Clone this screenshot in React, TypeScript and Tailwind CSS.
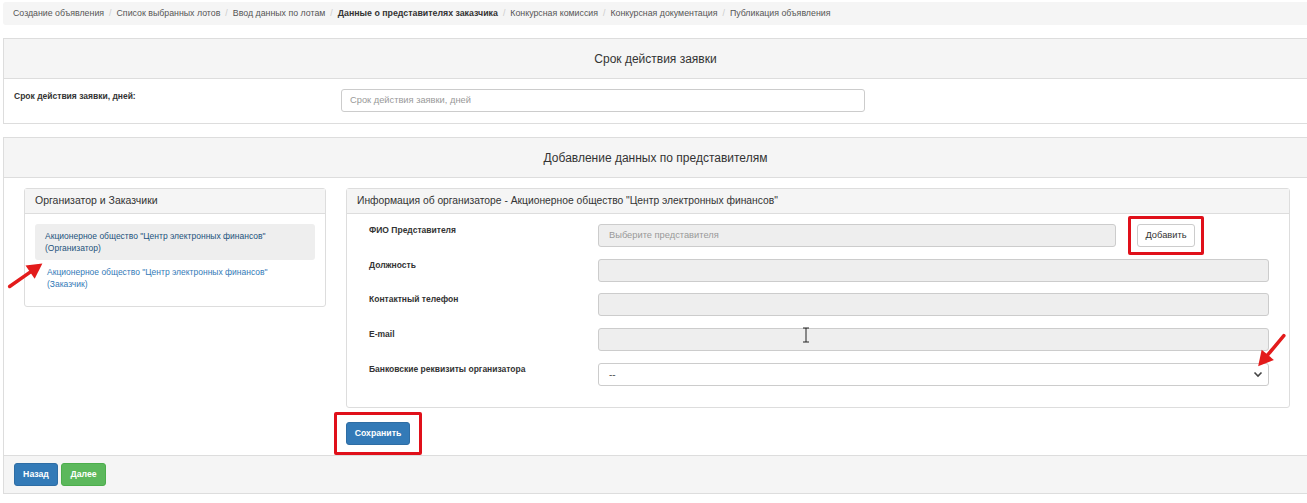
import React from "react";

const crumbs = [
  "Создание объявления",
  "Список выбранных лотов",
  "Ввод данных по лотам",
  "Данные о представителях заказчика",
  "Конкурсная комиссия",
  "Конкурсная документация",
  "Публикация объявления",
];

const Arrow = ({ className, rotate }: { className: string; rotate: number }) => (
  <svg className={className} width="46" height="46" viewBox="0 0 46 46" style={{ transform: `rotate(${rotate}deg)` }}>
    <line x1="3" y1="23" x2="32" y2="23" stroke="#e31b1b" strokeWidth="3.5" strokeLinecap="round" />
    <polygon points="43,23 28,15 28,31" fill="#e31b1b" />
  </svg>
);

const FieldRow = ({ label, children }: { label: string; children: React.ReactNode }) => (
  <div className="flex items-start">
    <div className="w-[251px] shrink-0 pl-[22px] text-[8.5px] font-bold leading-[12px] text-[#333]">{label}</div>
    <div className="flex-1">{children}</div>
  </div>
);

const Disabled = () => (
  <div className="h-[23px] w-full rounded-[3px] border border-[#ccc] bg-[#eee]" />
);

export default function App() {
  return (
    <div className="relative min-h-[503px] w-[1307px] bg-white text-[#333]" style={{ fontFamily: "'Liberation Sans', Arial, sans-serif" }}>
      {/* breadcrumb */}
      <div className="pl-[3px] pt-[2px]">
        <div className="flex h-[23px] items-center rounded-l-[3px] bg-[#f5f5f5] pl-[10px] text-[8.8px] text-[#555]">
          {crumbs.map((c, i) => (
            <React.Fragment key={c}>
              {i > 0 && <span className="px-[5px] text-[#ccc]">/</span>}
              <span className={i === 3 ? "font-bold text-[#333]" : ""}>{c}</span>
            </React.Fragment>
          ))}
        </div>
      </div>

      {/* panel 1 */}
      <div className="ml-[3px] mt-[13px] border border-r-0 border-[#ddd]">
        <div className="flex h-[40px] items-center justify-center border-b border-[#ddd] bg-[#f5f5f5] text-[12px] text-[#333]">
          Срок действия заявки
        </div>
        <div className="flex h-[44px] items-start pt-[10px]">
          <div className="w-[337px] pl-[10px] pt-[1px] text-[8.5px] font-bold leading-[12px]">Срок действия заявки, дней:</div>
          <div className="flex h-[23px] w-[524px] items-center rounded-[3px] border border-[#ccc] bg-white pl-[8px] text-[9.3px] text-[#999]">
            Срок действия заявки, дней
          </div>
        </div>
      </div>

      {/* panel 2 */}
      <div className="ml-[3px] mt-[13px] border border-r-0 border-[#ddd]">
        <div className="flex h-[40px] items-center justify-center border-b border-[#ddd] bg-[#f5f5f5] text-[12px] text-[#333]">
          Добавление данных по представителям
        </div>
        <div className="flex items-start gap-[20px] pl-[20px] pt-[10px]">
          {/* left list */}
          <div className="w-[302px] rounded-[3px] border border-[#ddd]">
            <div className="flex h-[25px] items-center border-b border-[#ddd] bg-[#f5f5f5] pl-[10px] text-[10.5px] text-[#333]">
              Организатор и Заказчики
            </div>
            <div className="px-[10px] pb-[10px] pt-[10px]">
              <div className="rounded-[3px] bg-[#eee] px-[10px] py-[6px] text-[8.5px] leading-[12px] text-[#23527c]">
                Акционерное общество "Центр электронных финансов"
                <br />
                (Организатор)
              </div>
              <div className="px-[12px] py-[6px] text-[8.5px] leading-[12px] text-[#337ab7]">
                Акционерное общество "Центр электронных финансов"
                <br />
                (Заказчик)
              </div>
            </div>
          </div>

          {/* right info */}
          <div className="w-[944px]">
            <div className="rounded-[3px] border border-[#ddd]">
              <div className="flex h-[25px] items-center border-b border-[#ddd] bg-[#f5f5f5] pl-[10px] text-[10.3px] text-[#333]">
                Информация об организаторе - Акционерное общество "Центр электронных финансов"
              </div>
              <div className="flex flex-col gap-[11.7px] pb-[21px] pr-[20px] pt-[10px]">
                <FieldRow label="ФИО Представителя">
                  <div className="flex items-center gap-[21px]">
                    <div className="flex h-[23px] w-[518px] items-center rounded-[3px] border border-[#ccc] bg-[#eee] pl-[10px] text-[9.3px] text-[#999]">
                      Выберите представителя
                    </div>
                    <div className="relative">
                      <div className="absolute -inset-x-[9px] -inset-y-[8px] rounded-[2px] border-[3px] border-[#e0101a]" />
                      <button className="flex h-[23px] w-[58px] items-center justify-center rounded-[3px] border border-[#ccc] bg-white text-[9.3px] text-[#333]">
                        Добавить
                      </button>
                    </div>
                  </div>
                </FieldRow>
                <FieldRow label="Должность">
                  <Disabled />
                </FieldRow>
                <FieldRow label="Контактный телефон">
                  <Disabled />
                </FieldRow>
                <FieldRow label="E-mail">
                  <Disabled />
                </FieldRow>
                <FieldRow label="Банковские реквизиты организатора">
                  <div className="flex h-[23px] w-full items-center justify-between rounded-[3px] border border-[#ccc] bg-white pl-[10px] pr-[5px] text-[10px] text-[#555]">
                    <span>--</span>
                    <svg width="10" height="10" viewBox="0 0 10 10">
                      <polyline points="1.5,3.5 5,7 8.5,3.5" fill="none" stroke="#444" strokeWidth="1.6" />
                    </svg>
                  </div>
                </FieldRow>
              </div>
            </div>
            <div className="flex pb-[10px] pt-[14px]">
              <div className="relative">
                <div className="absolute -inset-x-[12px] -inset-y-[10px] rounded-[2px] border-[3px] border-[#e0101a]" />
                <button className="flex h-[23px] w-[64px] items-center justify-center rounded-[3px] border border-[#2e6da4] bg-[#337ab7] text-[8.7px] font-bold text-white">
                  Сохранить
                </button>
              </div>
            </div>
          </div>
        </div>
        <div className="flex h-[38px] items-center gap-[3px] border-t border-[#ddd] bg-[#f5f5f5] pl-[10px]">
          <button className="flex h-[23px] w-[44px] items-center justify-center rounded-[3px] border border-[#2e6da4] bg-[#337ab7] text-[8.7px] font-bold text-white">
            Назад
          </button>
          <button className="flex h-[23px] w-[45px] items-center justify-center rounded-[3px] border border-[#4cae4c] bg-[#5cb85c] text-[8.7px] font-bold text-white">
            Далее
          </button>
        </div>
      </div>

      {/* red annotation arrows */}
      <Arrow className="absolute left-[3px] top-[252px]" rotate={-35} />
      <Arrow className="absolute left-[1248px] top-[328px]" rotate={130} />

      {/* text cursor */}
      <svg className="absolute left-[802px] top-[327px]" width="8" height="16" viewBox="0 0 8 16">
        <path d="M1 1h6M4 1v14M1 15h6" stroke="#222" strokeWidth="1" fill="none" />
      </svg>
    </div>
  );
}
